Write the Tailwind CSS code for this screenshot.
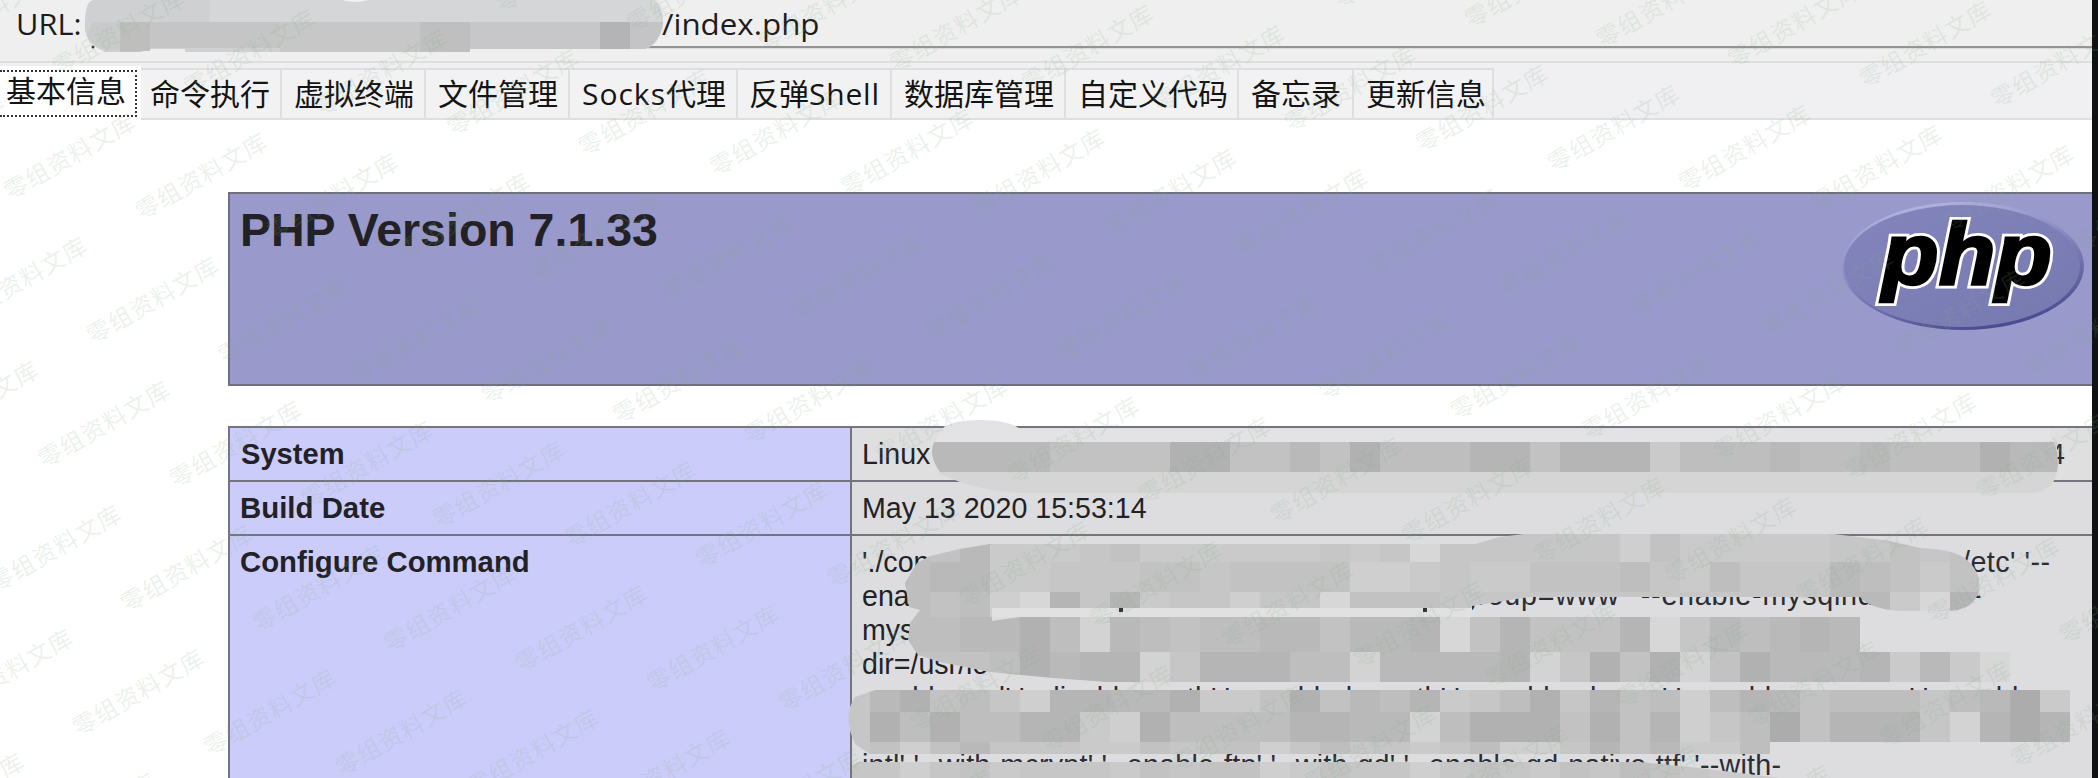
<!DOCTYPE html>
<html lang="zh">
<head>
<meta charset="utf-8">
<title>index.php</title>
<script src="https://cdn.jsdelivr.net/npm/@tailwindcss/browser@4"></script>
</head>
<body class="relative flex h-[778px] w-[2098px] overflow-hidden bg-white font-['Liberation_Sans',sans-serif] text-[#222226]">
<main class="flex w-[2092px] shrink-0 flex-col overflow-hidden">
  <header class="flex h-[61px] shrink-0 flex-col bg-[#f0eff0] font-['Open_Sans','Noto_Sans_CJK_SC',sans-serif] text-[29px] text-[#1c1c1c]">
    <div class="flex h-[46px] shrink-0 items-center pl-[16px] leading-none">
      <span class="w-[646px] origin-left scale-x-[1.06]">URL:</span>
      <span class="origin-left scale-x-[1.08]">/index.php</span>
    </div>
    <div class="ml-[648px] h-[3px] border-t-2 border-[#969394] bg-[#dddcdd]"></div>
  </header>
  <nav class="flex h-[59px] shrink-0 items-end border-y-2 border-b-[#dfdfe1] border-t-[#dededf] bg-[#f0eff2] font-['Open_Sans','Noto_Sans_CJK_SC',sans-serif] text-[30px] leading-none whitespace-nowrap text-[#141414]">
    <div class="-mb-[2px] flex h-[54px] w-[141px] items-center bg-white">
      <span class="flex h-[47px] w-[137px] items-center border-2 border-l-0 border-dotted border-[#333] pb-[4px] pl-[6px]">基本信息</span>
    </div>
    <div class="flex h-[50px] w-[141px] items-center border-t-2 border-r-2 border-[#dfdfe1] bg-[#f2f2f3] pl-[9px]">命令执行</div>
    <div class="flex h-[50px] w-[144px] items-center border-t-2 border-r-2 border-[#dfdfe1] bg-[#f2f2f3] pl-[12px]">虚拟终端</div>
    <div class="flex h-[50px] w-[144px] items-center border-t-2 border-r-2 border-[#dfdfe1] bg-[#f2f2f3] pl-[12px]">文件管理</div>
    <div class="flex h-[50px] w-[168px] items-center border-t-2 border-r-2 border-[#dfdfe1] bg-[#f2f2f3] pl-[12px]"><span class="tracking-[1px]">Socks</span>代理</div>
    <div class="flex h-[50px] w-[154px] items-center border-t-2 border-r-2 border-[#dfdfe1] bg-[#f2f2f3] pl-[11px]">反弹<span class="tracking-[.8px]">Shell</span></div>
    <div class="flex h-[50px] w-[174px] items-center border-t-2 border-r-2 border-[#dfdfe1] bg-[#f2f2f3] pl-[12px]">数据库管理</div>
    <div class="flex h-[50px] w-[173px] items-center border-t-2 border-r-2 border-[#dfdfe1] bg-[#f2f2f3] pl-[12px]">自定义代码</div>
    <div class="flex h-[50px] w-[115px] items-center border-t-2 border-r-2 border-[#dfdfe1] bg-[#f2f2f3] pl-[12px]">备忘录</div>
    <div class="flex h-[50px] w-[140px] items-center border-t-2 border-r-2 border-[#dfdfe1] bg-[#f2f2f3] pl-[12px]">更新信息</div>
  </nav>

  <section class="mt-[72px] ml-[228px] flex h-[194px] shrink-0 justify-between border-2 border-r-0 border-[#6f6f80] bg-[#9999cb]">
    <h1 class="mt-[10px] ml-[10px] text-[46.5px] leading-[52px] font-bold">PHP Version 7.1.33</h1>
    <svg class="mt-[6px] mr-[6px]" width="246" height="132" viewBox="1840 200 246 132" aria-label="php">
      <defs>
        <linearGradient id="face" x1="0" y1="0" x2="1" y2="1"><stop offset="0" stop-color="#8485bd"/><stop offset="1" stop-color="#7678b0"/></linearGradient>
        <linearGradient id="rim" x1=".3" y1="0" x2=".7" y2="1"><stop offset="0" stop-color="#b4b5e0"/><stop offset=".45" stop-color="#8586bf"/><stop offset="1" stop-color="#46478c"/></linearGradient>
      </defs>
      <ellipse cx="1963" cy="266" rx="121" ry="64" fill="url(#rim)"/>
      <ellipse cx="1962" cy="266" rx="118" ry="61" fill="url(#face)"/>
      <text x="1882" y="284" font-family="Liberation Sans" font-size="87" font-weight="700" font-style="italic" textLength="170" lengthAdjust="spacingAndGlyphs" fill="#000" stroke="#fff" stroke-width="8" stroke-linejoin="miter" paint-order="stroke">php</text>
      <text x="1882" y="284" font-family="Liberation Sans" font-size="87" font-weight="700" font-style="italic" textLength="170" lengthAdjust="spacingAndGlyphs" fill="#000" stroke="#000" stroke-width="2.5" aria-hidden="true">php</text>
    </svg>
  </section>

  <section class="mt-[40px] ml-[228px] grid shrink-0 grid-cols-[620px_1fr] grid-rows-[54px_54px_244px] border-l-2 border-[#74747e] text-[28.6px] leading-[34px]">
    <div class="border-t-2 border-[#74747e] bg-[#ccccfb] pt-[9px] pl-[11px] text-[29.1px] font-bold">System</div>
    <div class="border-t-2 border-l-2 border-[#74747e] bg-[#dfdfe0] pt-[9px] pl-[10px]">Linux</div>
    <div class="border-t-2 border-[#74747e] bg-[#ccccfb] pt-[9px] pl-[10px] text-[29.4px] font-bold">Build Date</div>
    <div class="border-t-2 border-l-2 border-[#74747e] bg-[#dddddf] pt-[9px] pl-[10px]">May 13 2020 15:53:14</div>
    <div class="border-t-2 border-[#74747e] bg-[#ccccfb] pt-[9px] pl-[10px] text-[29.3px] font-bold">Configure Command</div>
    <div class="border-t-2 border-l-2 border-[#74747e] bg-[#dddddf] pt-[9px] pl-[10px]">'./con<br>ena<br>mys<br>dir=/usr/lo</div>
  </section>
</main>
<aside class="h-[778px] w-[6px] shrink-0 bg-[#101112]"></aside>

<!-- redaction mosaic over the sensitive values -->
<svg class="pointer-events-none absolute inset-0" width="2098" height="778" viewBox="0 0 2098 778">
  <defs>
    <clipPath id="cS"><path d="M934 442H2054Q2060 458 2057 472H940Q928 456 934 442Z"/></clipPath>
    <clipPath id="cA"><path d="M917 563L930 556L960 549L990 544H1475L1500 537L1524 534H1834L1890 541L1920 548Q1955 549 1967 560Q1984 575 1978 595Q1968 612 1945 611L1900 611Q1870 609 1860 597H1530L1472 606V608H992V621L1020 617H2000V652H2010V682H1107L1053 678L990 672L940 662L918 655L908 640L910 623L920 610L909 607L905 583Z"/></clipPath>
    <clipPath id="cB"><path d="M875 690H2070V754H870L855 744Q842 716 855 697Z"/></clipPath>
    <clipPath id="cC"><path d="M852 778V766L858 762H1640L1700 768L1780 778Z"/></clipPath>
  </defs>
  <g font-family="Liberation Sans" font-size="28.7" fill="#2c2c34">
    <text x="2049" y="464">4</text>
    <text x="1962" y="572" textLength="88">/etc' '--</text>
    <text x="1400" y="605" textLength="480">php-group=www' '--enable-mysqlnd'</text>
    <text x="1972" y="605">-</text>
    <text x="864" y="708" textLength="1180">enable-xml' '--disable-rpath' '--enable-bcmath' '--enable-shmop' '--enable-sysvsem' '--enable-</text>
    <text x="862" y="775" textLength="919">intl' '--with-mcrypt' '--enable-ftp' '--with-gd' '--enable-gd-native-ttf' '--with-</text>
  </g>
  <path d="M932 455Q933 440 944 427Q955 420 980 420Q1008 420 1020 429H2050V442H932Z" fill="#e3e3e5"/>
  <path d="M932 455L940 474L960 482Q985 491 1020 493H2035Q2056 488 2057 470V442H934Z" fill="#d5d5d6"/>
  <rect x="990" y="608" width="482" height="9" fill="#e1e1e2"/>
  <path d="M85 30Q84 0 94 0H655Q664 8 663 26Q658 46 645 49H464V52H185V49H152L140 52H106Q88 46 85 30Z" fill="#cfd0d1"/>
  <path d="M210 0H655L662 22H210Z" fill="#d5d6d8"/>
  <path d="M340 0H368Q355 4 342 0Z" fill="#f1f1f1"/>
  <path d="M92 22H120V50H106Q91 44 87 36Z" fill="#c9caca"/>
  <path d="M120 22H280V48H152L140 52H120Z" fill="#c5c5c6"/>
  <path d="M120 22H150V51H120Z" fill="#bebfbd"/>
  <path d="M280 22H420V52H280Z" fill="#c7c7c8"/>
  <path d="M420 22H470V52H420Z" fill="#bebfbe"/>
  <path d="M470 22H600V49H470Z" fill="#c7c7c9"/>
  <path d="M600 22H630V49H600Z" fill="#b4b4b6"/>
  <path d="M630 22H663Q660 42 645 49H630Z" fill="#c4c4c6"/>
  <g id="cells" shape-rendering="crispEdges"></g>
  <path d="M1119 608h4v4h-4zM1423 608h4v4h-4z" fill="#333"/>
  <circle cx="93" cy="47" r="1.5" fill="#333"/>
</svg>

<!-- watermark pattern -->
<svg class="pointer-events-none absolute inset-0" width="2098" height="778" viewBox="0 0 2098 778">
  <g id="marks" font-family="Noto Sans CJK SC" font-size="23.5" letter-spacing="1.2" font-weight="400" fill="#82af87" fill-opacity=".18" text-anchor="middle"></g>
</svg>
<script>
const NS = 'http://www.w3.org/2000/svg';
// Each string is a row of 30px cells starting at x=840; digits are gray levels, '.' is empty.
const rows = [
  [442, 472, 'cS', '...44446666226646255533633385554554555244'],
  [534, 562, 'cA', '..56488876888888787b777777968888877676....'],
  [562, 592, 'cA', '..544887776676666998788666578577745686....'],
  [592, 612, 'cA', '..5659b373877977b6667777777777777448b37...'],
  [612, 617, 'cA', '..5659b.......'],
  [617, 652, 'cA', '..554425a45655446443b636663b745434....'],
  [652, 682, 'cA', '..66652433a733355a44443a7262a624443848b'],
  [690, 712, 'cB', '74265793344288626453875273659534655575418'],
  [712, 742, 'cB', '7252553389255553344a52226263975163337a313'],
  [742, 754, 'cB', '7696477788676697577875997364885'],
  [762, 778, 'cC', '7797687778676698677976786756788888']
];
const cells = document.getElementById('cells');
for (const [top, bottom, clip, levels] of rows) {
  const g = document.createElementNS(NS, 'g');
  g.setAttribute('clip-path', `url(#${clip})`);
  [...levels].forEach((c, i) => {
    if (c === '.') return;
    const v = 168 + 4.3 * parseInt(c, 16);
    const r = document.createElementNS(NS, 'rect');
    r.setAttribute('x', 840 + i * 30);
    r.setAttribute('y', top);
    r.setAttribute('width', 30);
    r.setAttribute('height', bottom - top);
    r.setAttribute('fill', `rgb(${v},${v},${v + 1})`);
    g.append(r);
  });
  cells.append(g);
}
const marks = document.getElementById('marks');
for (let n = -4; n < 9; n++) for (let m = -3; m < 20; m++) {
  const x = 70.3 + 131.5 * m - 48.6 * n, y = 156.7 + 20 * m + 124 * n;
  if (x < -80 || x > 2180 || y < -60 || y > 840) continue;
  const t = document.createElementNS(NS, 'text');
  t.setAttribute('transform', `translate(${x} ${y}) rotate(-30)`);
  t.setAttribute('y', 8);
  t.textContent = '零组资料文库';
  marks.append(t);
}
</script>
</body>
</html>
